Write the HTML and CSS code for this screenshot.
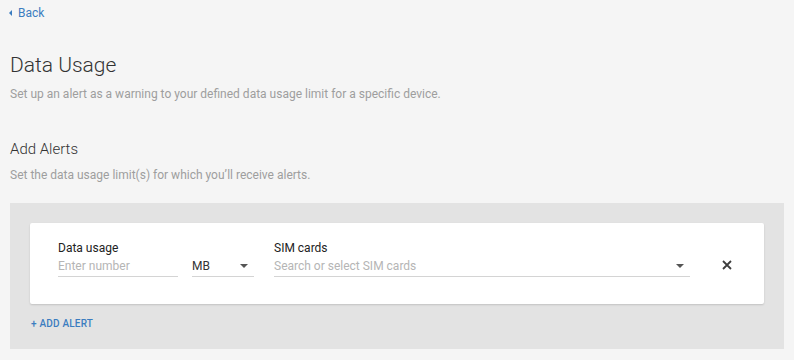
FILE: index.html
```html
<!DOCTYPE html>
<html lang="en">
<head>
    <meta charset="UTF-8">
    <meta name="viewport" content="width=device-width, initial-scale=1.0">
    <title>Data Usage</title>
    <link rel="stylesheet" href="styles.css">
</head>
<body>
    <div class="page">
        <a href="#" class="back-link"><span class="back-arrow"></span>Back</a>

        <h1 class="page-title">Data Usage</h1>
        <p class="page-desc">Set up an alert as a warning to your defined data usage limit for a specific device.</p>

        <h2 class="section-title">Add Alerts</h2>
        <p class="section-desc">Set the data usage limit(s) for which you’ll receive alerts.</p>

        <div class="alerts-panel">
            <div class="alert-card">
                <div class="field field-usage">
                    <label for="usage">Data usage</label>
                    <input type="text" id="usage" placeholder="Enter number">
                </div>
                <div class="field field-unit">
                    <label>&nbsp;</label>
                    <div class="select-box">
                        <span class="select-value">MB</span>
                        <span class="caret"></span>
                    </div>
                </div>
                <div class="field field-sims">
                    <label for="sims">SIM cards</label>
                    <div class="select-box">
                        <input type="text" id="sims" placeholder="Search or select SIM cards">
                        <span class="caret"></span>
                    </div>
                </div>
                <button type="button" class="remove-btn" aria-label="Remove">
                    <svg width="10" height="10" viewBox="0 0 10 10">
                        <path d="M1 1 L9 9 M9 1 L1 9" stroke="#3d3d3d" stroke-width="1.8" fill="none"/>
                    </svg>
                </button>
            </div>
            <a href="#" class="add-alert">+ ADD ALERT</a>
        </div>
    </div>
</body>
</html>
```

FILE: styles.css
```css
* {
    box-sizing: border-box;
    margin: 0;
    padding: 0;
}

body {
    background-color: #f5f5f5;
    font-family: Roboto, 'Liberation Sans', sans-serif;
    color: #333;
}

.page {
    padding: 1px 10px 10px;
}

.back-link {
    display: inline-flex;
    align-items: center;
    font-size: 12px;
    line-height: 16px;
    color: #3b7dc0;
    text-decoration: none;
    margin-left: -1px;
}

.back-arrow {
    width: 0;
    height: 0;
    border-top: 3px solid transparent;
    border-bottom: 3px solid transparent;
    border-right: 3px solid #3b7dc0;
    margin-right: 6px;
}

.page-title {
    margin-top: 30px;
    font-size: 21px;
    line-height: 28px;
    font-weight: 300;
    color: #333;
}

.page-desc,
.section-desc {
    margin-top: 6px;
    font-size: 12px;
    line-height: 18px;
    color: #9e9e9e;
}

.section-title {
    margin-top: 35px;
    font-size: 15px;
    line-height: 22px;
    font-weight: 300;
    color: #333;
}

.alerts-panel {
    margin-top: 19px;
    background-color: #e3e3e3;
    padding: 20px 20px 18px;
}

.alert-card {
    display: flex;
    align-items: flex-start;
    background: white;
    border-radius: 2px;
    box-shadow: 0 1px 2px rgba(0, 0, 0, 0.15);
    padding: 17px 26px 27px 28px;
}

.field label {
    display: block;
    font-size: 12px;
    line-height: 16px;
    font-weight: 400;
    color: #222;
}

.field input {
    display: block;
    width: 100%;
    height: 21px;
    border: none;
    border-bottom: 1px solid #d4d4d4;
    background: transparent;
    font-family: inherit;
    font-size: 12px;
    line-height: 20px;
    color: #333;
    outline: none;
}

.field input::placeholder {
    color: #b5b5b5;
}

.field-usage {
    width: 120px;
}

.field-unit {
    width: 62px;
    margin-left: 14px;
}

.field-sims {
    flex: 1;
    margin-left: 20px;
}

.select-box {
    display: flex;
    align-items: center;
    height: 21px;
    border-bottom: 1px solid #d4d4d4;
}

.select-box input {
    flex: 1;
    border-bottom: none;
    height: 20px;
}

.select-value {
    flex: 1;
    font-size: 12px;
    line-height: 20px;
    color: #333;
}

.caret {
    width: 0;
    height: 0;
    border-left: 4px solid transparent;
    border-right: 4px solid transparent;
    border-top: 4px solid #555;
    margin-right: 6px;
}

.remove-btn {
    width: 22px;
    height: 22px;
    margin-left: 26px;
    margin-top: 14px;
    border: none;
    background: none;
    display: flex;
    align-items: center;
    justify-content: center;
    cursor: pointer;
}

.add-alert {
    display: inline-block;
    margin-top: 13px;
    margin-left: 1px;
    font-size: 10px;
    line-height: 14px;
    font-weight: 500;
    color: #3b7dc0;
    text-decoration: none;
    letter-spacing: 0.2px;
}
```
